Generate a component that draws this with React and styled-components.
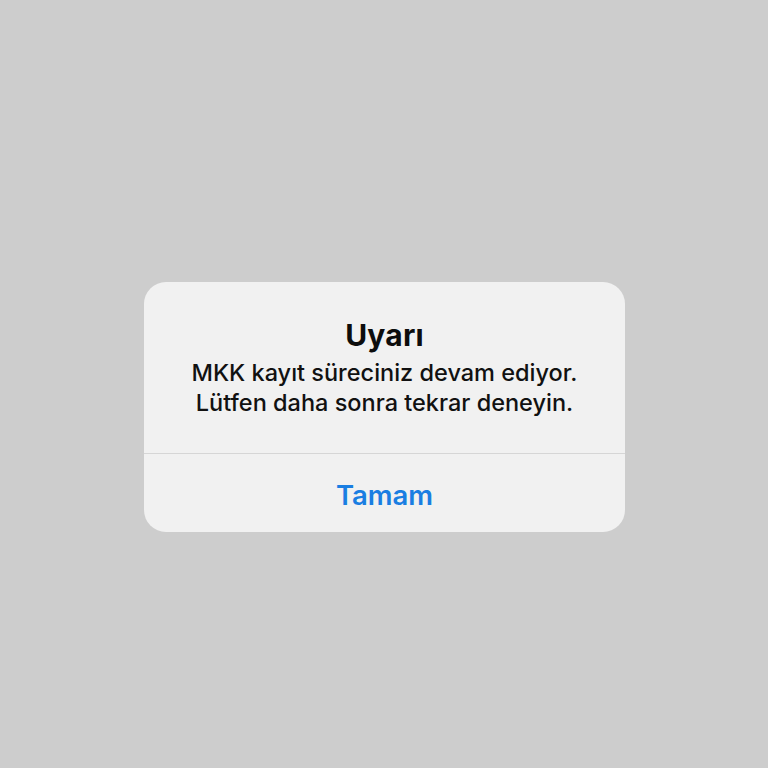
import React from 'react';
import styled, { createGlobalStyle } from 'styled-components';

const GlobalStyle = createGlobalStyle`
  html, body {
    margin: 0;
    padding: 0;
    background: #cdcdcd;
  }
  body {
    font-family: Inter, "Noto Sans", "Liberation Sans", sans-serif;
  }
`

const Screen = styled.div`
  width: 768px;
  height: 768px;
  display: flex;
  align-items: flex-start;
  justify-content: center;
  padding-top: 282px;
  box-sizing: border-box;
`
const AlertBox = styled.div`
  width: 481px;
  height: 250px;
  margin-left: 1px;
  background: #f1f1f1;
  border-radius: 22px;
  display: flex;
  flex-direction: column;
  overflow: hidden;
`
const AlertBody = styled.div`
  height: 172px;
  box-sizing: border-box;
  padding-top: 35px;
  display: flex;
  flex-direction: column;
  align-items: center;
  border-bottom: 1px solid #d6d6d6;
`
const Title = styled.h2`
  margin: 0;
  font-size: 30px;
  line-height: 36px;
  font-weight: 700;
  letter-spacing: 0.2px;
  color: #0d0d0d;
`
const Message = styled.p`
  margin: 5px 0 0;
  font-size: 23.5px;
  line-height: 30px;
  font-weight: 500;
  color: #111;
  text-align: center;
`
const ActionButton = styled.button`
  flex: 1;
  border: none;
  background: transparent;
  font-family: inherit;
  font-size: 27.5px;
  font-weight: 600;
  color: #1a7ee2;
  cursor: pointer;
  padding: 3px 0 0;
`

export default function App() {
  return (
    <>
      <GlobalStyle />
      <Screen>
        <AlertBox>
          <AlertBody>
            <Title>Uyarı</Title>
            <Message>
              MKK kayıt süreciniz devam ediyor.
              <br />
              Lütfen daha sonra tekrar deneyin.
            </Message>
          </AlertBody>
          <ActionButton>Tamam</ActionButton>
        </AlertBox>
      </Screen>
    </>
  );
}
